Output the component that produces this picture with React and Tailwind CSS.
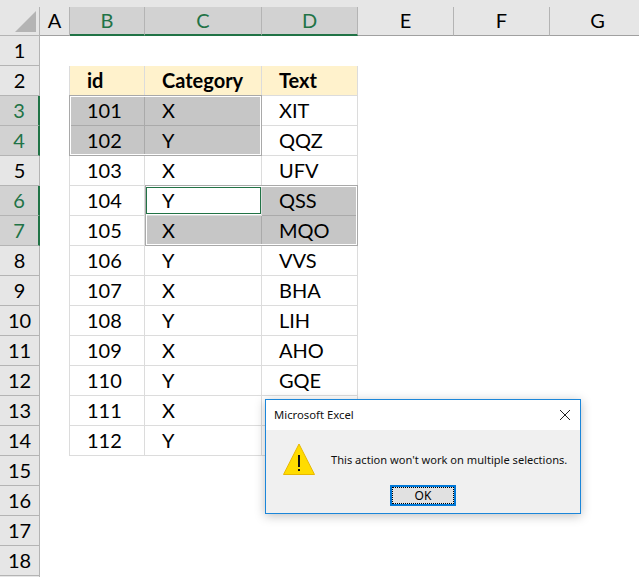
const cols = ['A', 'B', 'C', 'D', 'E', 'F', 'G'];
const widths = { A: 'w-[30px]', B: 'w-[75px]', C: 'w-[117px]', D: 'w-[96px]', E: 'w-[96px]', F: 'w-[96px]', G: 'w-[96px]' };
const selCols = ['B', 'C', 'D'];
const selRows = [3, 4, 6, 7];
const data = [
  [101, 'X', 'XIT'], [102, 'Y', 'QQZ'], [103, 'X', 'UFV'], [104, 'Y', 'QSS'],
  [105, 'X', 'MQO'], [106, 'Y', 'VVS'], [107, 'X', 'BHA'], [108, 'Y', 'LIH'],
  [109, 'X', 'AHO'], [110, 'Y', 'GQE'], [111, 'X', ''], [112, 'Y', ''],
];
const greyCells = new Set(['3B', '3C', '4B', '4C', '6D', '7C', '7D']);

function Cell({ row, col, bold, head, children }) {
  const grey = greyCells.has(row + col);
  return (
    <div
      className={`h-[30px] flex items-center border-r border-b pl-[17px] pb-[2px] ${
        grey ? 'bg-[#c6c6c6] border-[#aaaaaa]' : head ? 'bg-[#fff2cc] border-[#dcdcdc]' : 'bg-white border-[#dcdcdc]'
      } ${col === 'B' ? 'border-l' : ''} ${bold ? 'font-bold' : ''}`}
    >
      {children}
    </div>
  );
}

function Warning() {
  return (
    <svg width="33" height="33" viewBox="0 0 33 33" className="shrink-0">
      <path d="M16 1 L31.5 31.5 L0.5 31.5 Z" fill="#ffdc00" stroke="#e8b800" strokeWidth="1" strokeLinejoin="round" />
      <rect x="15" y="12" width="2" height="12" fill="#111" />
      <rect x="15" y="26" width="2" height="2" fill="#111" />
    </svg>
  );
}

export default function App() {
  return (
    <div className="relative w-[639px] h-[577px] overflow-hidden bg-white text-[20px] leading-none text-black font-['Lato','Liberation_Sans',sans-serif]">
      <div className="h-[7px] bg-[#e6e6e6]" />
      {/* Column headers */}
      <div className="flex h-[29px]">
        <div className="w-[40px] shrink-0 bg-[#e6e6e6] border-r border-b border-[#b4b4b4] flex items-end justify-end pr-[3px] pb-[3px]">
          <div className="w-[21px] h-[21px] bg-[#b4b4b4] [clip-path:polygon(100%_0,100%_100%,0_100%)]" />
        </div>
        {cols.map((c) => {
          const sel = selCols.includes(c);
          return (
            <div
              key={c}
              className={`${widths[c]} shrink-0 flex items-center justify-center pb-[2px] border-r border-[#b4b4b4] ${
                sel ? 'bg-[#d2d2d2] text-[#217346] border-b-[2px] border-b-[#217346]' : 'bg-[#e6e6e6] border-b border-b-[#a0a0a0]'
              }`}
            >
              {c}
            </div>
          );
        })}
      </div>
      {/* Rows */}
      {Array.from({ length: 18 }, (_, i) => i + 1).map((r) => {
        const sel = selRows.includes(r);
        const d = r >= 3 && r <= 14 ? data[r - 3] : null;
        return (
          <div key={r} className="flex h-[30px]">
            <div
              className={`w-[40px] shrink-0 flex items-center justify-center pb-[2px] border-b border-b-[#b4b4b4] ${
                sel ? 'bg-[#d2d2d2] text-[#217346] border-r-[2px] border-r-[#217346]' : 'bg-[#e6e6e6] border-r border-r-[#b4b4b4]'
              }`}
            >
              {r}
            </div>
            <div className="w-[29px] shrink-0" />
            {r === 2 && (
              <>
                <div className="w-[76px]"><Cell row={r} col="B" bold head>id</Cell></div>
                <div className="w-[117px]"><Cell row={r} col="C" bold head>Category</Cell></div>
                <div className="w-[96px]"><Cell row={r} col="D" bold head>Text</Cell></div>
              </>
            )}
            {d && (
              <>
                <div className="w-[76px]"><Cell row={r} col="B">{d[0]}</Cell></div>
                <div className="w-[117px]"><Cell row={r} col="C">{d[1]}</Cell></div>
                <div className="w-[96px]"><Cell row={r} col="D">{d[2]}</Cell></div>
              </>
            )}
          </div>
        );
      })}
      <div className="w-[40px] h-[1px] bg-[#e6e6e6] border-r border-r-[#b4b4b4]" />

      {/* Multi-selection outlines */}
      <div className="absolute left-[69px] top-[95px] w-[193px] h-[61px] border border-[#a9a9a9] outline outline-1 -outline-offset-2 outline-white pointer-events-none" />
      <div className="absolute left-[145px] top-[185px] w-[213px] h-[61px] border border-[#a9a9a9] outline outline-1 -outline-offset-2 outline-white pointer-events-none" />
      <div className="absolute left-[146px] top-[187px] w-[115px] h-[27px] border border-[#217346] pointer-events-none" />

      {/* Dialog */}
      <div className="absolute left-[265px] top-[399px] w-[316px] h-[115px] border border-[#1b86d9] bg-[#f0f0f0] shadow-[0_2px_10px_rgba(0,0,0,0.25)] flex flex-col font-['Noto_Sans',sans-serif]">
        <div className="h-[30px] bg-white flex items-center justify-between pl-[8px] pr-[8px] text-[11.3px] text-[#111]">
          <span>Microsoft Excel</span>
          <svg width="12" height="12" viewBox="0 0 12 12" className="mr-[1px]">
            <path d="M1 1 L11 11 M11 1 L1 11" stroke="#222" strokeWidth="1" fill="none" />
          </svg>
        </div>
        <div className="flex items-center pl-[17px] pt-[13px] gap-[15px] text-[11.1px] text-[#111]">
          <Warning />
          <span className="whitespace-nowrap">This action won't work on multiple selections.</span>
        </div>
        <div className="flex justify-center pt-[9px]">
          <button className="w-[66px] h-[21px] border-2 border-[#0078d7] bg-[#e1e1e1] text-[12px] text-black outline outline-1 outline-dotted -outline-offset-3 outline-black flex items-center justify-center">
            OK
          </button>
        </div>
      </div>
    </div>
  );
}
